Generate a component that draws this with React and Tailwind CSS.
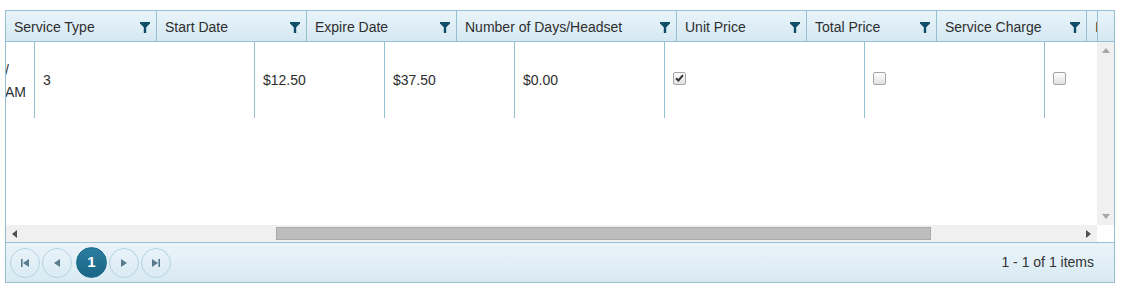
import React from "react"

const headers = [
  { label: "Service Type", w: "w-[151px]" },
  { label: "Start Date", w: "w-[150px]" },
  { label: "Expire Date", w: "w-[150px]" },
  { label: "Number of Days/Headset", w: "w-[220px]" },
  { label: "Unit Price", w: "w-[130px]" },
  { label: "Total Price", w: "w-[130px]" },
  { label: "Service Charge", w: "w-[150px]" },
  { label: "IsActive", w: "w-[150px]" },
]

function Funnel() {
  return (
    <svg width="10" height="11" viewBox="0 0 10 11" className="shrink-0">
      <path d="M0 0H10V1.5L6.2 5.2V11H3.8V5.2L0 1.5Z" fill="#0f4d68" />
    </svg>
  )
}

function Check({ checked }) {
  return (
    <div className="w-[13px] h-[13px] rounded-[2px] border border-[#a6a6a6] bg-gradient-to-b from-[#fdfdfd] to-[#e2e2e2] flex items-center justify-center">
      {checked && (
        <svg width="9" height="8" viewBox="0 0 9 8">
          <path d="M1 4.2L3.4 6.5L8 1.2" stroke="#333" strokeWidth="2" fill="none" />
        </svg>
      )}
    </div>
  )
}

function PageBtn({ children }) {
  return (
    <button className="w-[30px] h-[30px] rounded-full border border-[#b3d3e1] flex items-center justify-center text-[#587b8e]">
      {children}
    </button>
  )
}

export default function App() {
  return (
    <div className="pt-[10px] pl-[5px] font-['Liberation_Sans',Arial,sans-serif] text-[14px] text-[#2e2e2e]">
      <div className="w-[1110px] border border-[#94c0d2] bg-white">
        {/* Header */}
        <div className="flex h-[31px] border-b border-[#94c0d2] bg-gradient-to-b from-[#e9f4fa] to-[#d5e8f2]">
          <div className="w-[1091px] overflow-hidden flex">
            {headers.map((h) => (
              <div
                key={h.label}
                className={`${h.w} shrink-0 flex items-center justify-between pl-2 pr-[6px] pt-[3px] border-r border-[#94c0d2] whitespace-nowrap`}
              >
                <span>{h.label}</span>
                <Funnel />
              </div>
            ))}
          </div>
          <div className="w-[17px] border-l border-[#94c0d2]" />
        </div>

        {/* Body */}
        <div className="flex h-[200px]">
          <div className="w-[1091px] flex flex-col">
            <div className="h-[183px] overflow-hidden">
              <div className="flex h-[76px] w-[1200px]">
                <div className="w-[28px] shrink-0 overflow-hidden flex flex-col justify-center leading-[22px] pt-[1px]">
                  <div className="flex justify-end pr-[25px]">
                    <span className="shrink-0 whitespace-nowrap">12/1/</span>
                  </div>
                  <div className="flex justify-end pr-[8px]">
                    <span className="shrink-0 whitespace-nowrap">AM</span>
                  </div>
                </div>
                <div className="w-[220px] shrink-0 border-l border-[#94c0d2] flex items-center px-2">3</div>
                <div className="w-[130px] shrink-0 border-l border-[#94c0d2] flex items-center px-2">$12.50</div>
                <div className="w-[130px] shrink-0 border-l border-[#94c0d2] flex items-center px-2">$37.50</div>
                <div className="w-[150px] shrink-0 border-l border-[#94c0d2] flex items-center px-2">$0.00</div>
                <div className="w-[200px] shrink-0 border-l border-[#94c0d2] flex items-center pl-2 pb-[4px]">
                  <Check checked />
                </div>
                <div className="w-[180px] shrink-0 border-l border-[#94c0d2] flex items-center pl-2 pb-[4px]">
                  <Check />
                </div>
                <div className="w-[180px] shrink-0 border-l border-[#94c0d2] flex items-center pl-2 pb-[4px]">
                  <Check />
                </div>
              </div>
            </div>
            {/* Horizontal scrollbar */}
            <div className="h-[17px] bg-[#f0f0f0] flex items-center">
              <div className="w-[17px] flex justify-center">
                <svg width="5" height="8" viewBox="0 0 5 8">
                  <path d="M5 0V8L0 4Z" fill="#505050" />
                </svg>
              </div>
              <div className="ml-[253px] w-[655px] h-[13px] bg-[#bdbdbd] border border-[#a9a9a9]" />
              <div className="flex-1" />
              <div className="w-[17px] flex justify-center">
                <svg width="5" height="8" viewBox="0 0 5 8">
                  <path d="M0 0V8L5 4Z" fill="#505050" />
                </svg>
              </div>
            </div>
          </div>
          {/* Vertical scrollbar */}
          <div className="w-[17px] flex flex-col">
            <div className="h-[183px] bg-[#f0f0f0] flex flex-col items-center justify-between py-[6px]">
              <svg width="8" height="5" viewBox="0 0 8 5">
                <path d="M0 5H8L4 0Z" fill="#a6a6a6" />
              </svg>
              <svg width="8" height="5" viewBox="0 0 8 5">
                <path d="M0 0H8L4 5Z" fill="#a6a6a6" />
              </svg>
            </div>
            <div className="h-[17px] bg-white" />
          </div>
        </div>

        {/* Pager */}
        <div className="h-[40px] border-t border-[#94c0d2] bg-gradient-to-b from-[#eaf4f9] to-[#d9eaf3] flex items-center pl-[4px] pr-[20px]">
          <div className="flex items-center gap-[2px]">
            <PageBtn>
              <svg width="8" height="8" viewBox="0 0 8 8">
                <path d="M0 0H1.6V8H0Z M8 0V8L2 4Z" fill="#587b8e" />
              </svg>
            </PageBtn>
            <PageBtn>
              <svg width="6" height="8" viewBox="0 0 6 8">
                <path d="M6 0V8L0 4Z" fill="#587b8e" />
              </svg>
            </PageBtn>
            <div className="ml-[2px] w-[31px] h-[31px] rounded-full bg-gradient-to-b from-[#2b7ea0] to-[#1a6585] border border-[#1c6a8a] text-white font-bold text-[15px] flex items-center justify-center">
              1
            </div>
            <PageBtn>
              <svg width="6" height="8" viewBox="0 0 6 8">
                <path d="M0 0V8L6 4Z" fill="#587b8e" />
              </svg>
            </PageBtn>
            <PageBtn>
              <svg width="8" height="8" viewBox="0 0 8 8">
                <path d="M0 0V8L6 4Z M6.4 0H8V8H6.4Z" fill="#587b8e" />
              </svg>
            </PageBtn>
          </div>
          <div className="flex-1" />
          <span className="text-[#333]">1 - 1 of 1 items</span>
        </div>
      </div>
    </div>
  )
}
